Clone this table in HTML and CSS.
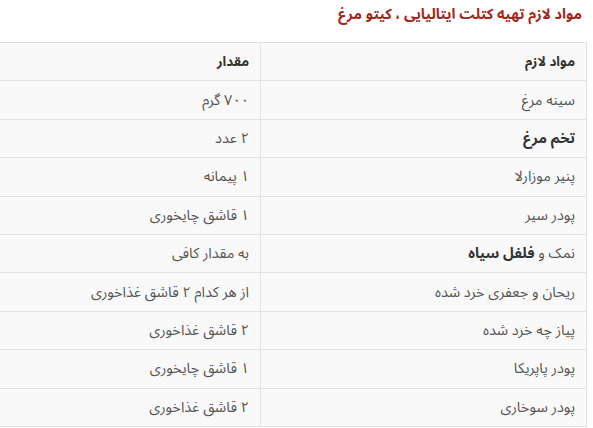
FILE: index.html
```html
<!DOCTYPE html>
<html lang="fa" dir="rtl">
<head>
<meta charset="utf-8">
<link rel="stylesheet" href="styles.css">
</head>
<body>
<div class="page">
  <h3 class="title">مواد لازم تهیه کتلت ایتالیایی ، کیتو مرغ</h3>
  <div class="table-wrap">
    <table class="ing">
      <thead>
        <tr><th class="c1">مواد لازم</th><th class="c2">مقدار</th></tr>
      </thead>
      <tbody>
        <tr><td>سینه مرغ</td><td>۷۰۰ گرم</td></tr>
        <tr><td><strong>تخم مرغ</strong></td><td>۲ عدد</td></tr>
        <tr><td>پنیر موزارلا</td><td>۱ پیمانه</td></tr>
        <tr><td>پودر سیر</td><td>۱ قاشق چایخوری</td></tr>
        <tr><td>نمک و <strong>فلفل سیاه</strong></td><td>به مقدار کافی</td></tr>
        <tr><td>ریحان و جعفری خرد شده</td><td>از هر کدام ۲ قاشق غذاخوری</td></tr>
        <tr><td>پیاز چه خرد شده</td><td>۲ قاشق غذاخوری</td></tr>
        <tr><td>پودر پاپریکا</td><td>۱ قاشق چایخوری</td></tr>
        <tr><td>پودر سوخاری</td><td>۲ قاشق غذاخوری</td></tr>
      </tbody>
    </table>
  </div>
</div>
</body>
</html>
```
FILE: styles.css
```css
html, body {
  margin: 0;
  padding: 0;
  background: #ffffff;
}
body {
  font-family: "Noto Sans Arabic", "Vazirmatn", "DejaVu Sans", sans-serif;
  color: #555555;
}
.page {
  width: 593px;
  overflow: hidden;
}
.title {
  margin: 0;
  padding: 3px 11px 0 0;
  height: 42px;
  box-sizing: border-box;
  font-size: 14.5px;
  font-weight: bold;
  color: #a3261f;
  line-height: 24px;
  letter-spacing: -0.8px;
}
.table-wrap {
  padding-right: 6px;
  display: flex;
  justify-content: flex-start;
}
.ing {
  flex: none;
  width: 600px;
  border-collapse: collapse;
  background: #f9f9f9;
  font-size: 14.5px;
  margin-left: -14px;
}
.ing th, .ing td {
  border: 1px solid #e2e2e2;
  height: 38.4px;
  padding: 0 11px 0 10px;
  text-align: right;
  vertical-align: middle;
  box-sizing: border-box;
}
.ing th {
  font-weight: bold;
  font-size: 13.5px;
  color: #333333;
}
.ing .c1 { width: 326px; }
.ing strong { color: #333333; }
```
